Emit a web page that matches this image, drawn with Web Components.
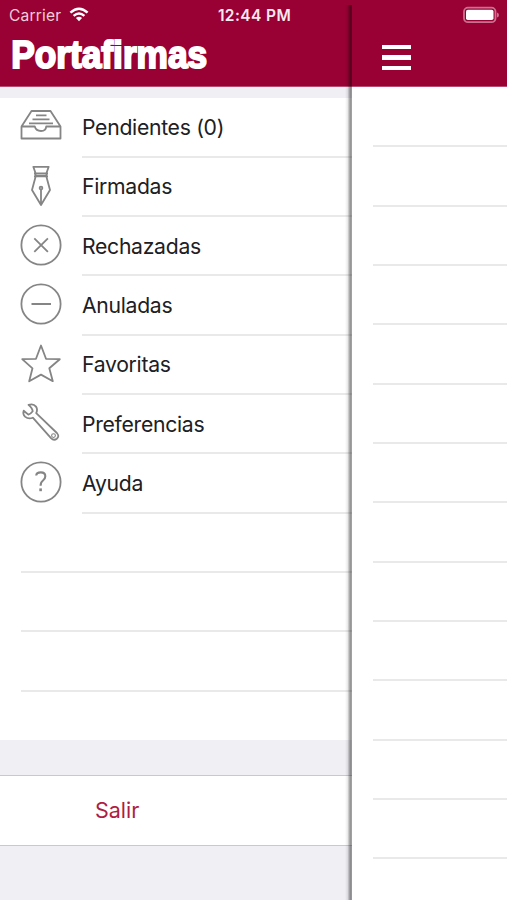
<!DOCTYPE html>
<html lang="es">
<head>
<meta charset="utf-8">
<title>Portafirmas</title>
<style>
html,body{margin:0;height:100%;overflow:hidden;background:#fff}
body{font-family:Inter,"Liberation Sans",sans-serif;color:#202022}
</style>
</head>
<body>
<portafirmas-app></portafirmas-app>
<script>
const define = (name, html, setup) => {
  const t = document.createElement('template');
  t.innerHTML = html;
  customElements.define(name, class extends HTMLElement {
    constructor() {
      super();
      this.attachShadow({mode: 'open'}).append(t.content.cloneNode(true));
    }
    connectedCallback() { if (setup) setup(this, this.shadowRoot); }
  });
};

define('status-bar', `
<style>
:host{position:absolute;top:0;left:0;right:0;height:30px;display:grid;grid-template-columns:1fr auto 1fr;align-items:center;padding:0 7px 0 9px;box-sizing:border-box;color:#fff;z-index:3}
.left{display:flex;align-items:center;gap:8px;font-size:15.6px;letter-spacing:.15px;color:#f0cdd8}
.time{font-size:15.5px;font-weight:600;letter-spacing:.4px;color:#fae9ee}
.right{display:flex;justify-content:flex-end}
svg{display:block}
.left svg{margin-top:-2px}
</style>
<div class="left"><span>Carrier</span>
<svg width="20" height="15" viewBox="0 0 20 15" fill="none" stroke="#fff" stroke-width="2.5"><path d="M1.4 5.6Q10-2.2 18.6 5.6M4.6 8.9Q10 4.1 15.4 8.9"/><path d="M6.9 11.1Q10 8.6 13.1 11.1L10 14.2Z" fill="#fff" stroke="none"/></svg></div>
<div class="time">12:44 PM</div>
<div class="right"><svg width="37" height="18" viewBox="0 0 37 18"><rect x="1" y="1.6" width="31.5" height="14.6" rx="4" fill="none" stroke="#c9718e" stroke-width="1.8"/><rect x="3" y="3.7" width="27.5" height="10.4" rx="1.8" fill="#fff"/><path d="M34 6.5Q36 7 36 9T34 11.5Z" fill="#c9718e"/></svg></div>`);

define('app-title', `
<style>
:host{display:block}svg{display:block;overflow:visible}
text{font:bold 39px "Liberation Sans",sans-serif;fill:#fff;stroke:#fff;stroke-width:2.1px}
</style>
<svg width="200" height="40"><text x="-.8" y="29.800" textLength="196" lengthAdjust="spacingAndGlyphs">Portafirmas</text></svg>`);

const icons = {
  tray: '<path d="M1.5 21.5V33.5H40.5V21.5L30.5 6H11.5L1.5 21.5H14.8Q16 26 21 26T26.200 21.5H40.500M16 10.300H26.500M12.500 14.300H29.500M9 18.300H33"/>',
  pen: '<path d="M13.300 1.800H28.700L26.500 8V11H15.500V8L13.300 1.800ZM14 8.500H28M14 11.400H28M15.500 12L12 25L21 40L30 25L26.500 12M21 24V39"/><circle cx="21" cy="23" r="1.400"/>',
  cross: '<circle cx="21" cy="21" r="19.600"/><path d="M14.300 14.300L27.900 27.900M27.900 14.300L14.300 27.900"/>',
  minus: '<circle cx="21" cy="21" r="19.600"/><path d="M11.500 21H31" stroke-width="2"/>',
  star: '<path d="M21 2.500L26 15.800L39.800 16.200L29.300 25.300L32.800 38.200L21 31.600L9.200 38.200L12.500 25.300L2.200 16.200L16 15.800Z"/>',
  wrench: '<path d="M8.500 2.900Q13.500 1.200 16 4.600Q18 7.300 16.200 11.200L36.900 31Q39.800 34.300 36.800 36.800Q33.800 39 31 36.200L12.800 15.700Q8.500 17.600 5 14.600Q2.500 12 3.700 8.700L8.400 12.600Q10.600 12 12.700 9.200Q12.500 6.300 8.500 2.900Z"/><circle cx="33.500" cy="33.600" r="1.900" stroke-width="1.100"/>',
  help: '<circle cx="21" cy="21" r="19.600"/><path d="M16.200 14.500Q16.500 11.400 20.800 11.400Q25.300 11.400 25.300 15.300Q25.300 17.800 23 19.500Q20.600 21.200 20.600 24.800" stroke-width="2.100"/><path d="M20.600 27.400V30.200" stroke-width="2.600"/>'
};
define('line-icon', `
<style>:host{display:block;width:42px;height:42px}svg{display:block}</style>
<svg width="42" height="42" viewBox="0 0 42 42" fill="none" stroke="#858585" stroke-width="1.800" stroke-linejoin="round"></svg>`,
(host, root) => { root.querySelector('svg').innerHTML = icons[host.getAttribute('name')] || ''; });

define('menu-row', `
<style>
:host{display:grid;grid-template-columns:62px 1fr;height:59.34px;padding-left:20px;box-sizing:border-box}
.icon{padding:6.900px 0 0 .4px}
.label{display:flex;align-items:center;font-size:21.200px;letter-spacing:-.3px;border-bottom:2px solid #e9e9ea;white-space:nowrap}
</style>
<div class="icon"></div><div class="label"><slot></slot></div>`,
(host, root) => {
  const icon = document.createElement('line-icon');
  icon.setAttribute('name', host.getAttribute('icon'));
  root.querySelector('.icon').replaceChildren(icon);
});

define('blank-row', `
<style>:host{display:block;height:59.34px;box-sizing:border-box;margin-left:21px;border-bottom:2px solid #e9e9ea}</style>`);

define('menu-drawer', `
<style>
:host{display:flex;flex-direction:column;height:900px;background:#efeff4;box-sizing:border-box;position:relative}
header{height:87px;background:#990033;padding:38px 0 0 12px;box-sizing:border-box;border-bottom:1px solid #b64c70}
.list{margin-top:11px;height:642px;background:#fff;overflow:hidden;box-sizing:border-box;padding-top:.4px}
.exit{margin-top:35px;height:71px;box-sizing:border-box;border-top:1.500px solid #c9c9cd;border-bottom:1.500px solid #c9c9cd;background:#fff;display:flex;align-items:center;padding:0 0 2px 95px;color:#b01c43;font-size:21.500px}
.edge{position:absolute;top:5px;right:0;bottom:0;width:7px;background:linear-gradient(90deg,transparent,rgba(0,0,0,.08) 35%,rgba(0,0,0,.42) 75%,rgba(0,0,0,.35))}
</style>
<header><app-title></app-title></header>
<div class="list">
<menu-row icon="tray">Pendientes (0)</menu-row>
<menu-row icon="pen">Firmadas</menu-row>
<menu-row icon="cross">Rechazadas</menu-row>
<menu-row icon="minus">Anuladas</menu-row>
<menu-row icon="star">Favoritas</menu-row>
<menu-row icon="wrench">Preferencias</menu-row>
<menu-row icon="help">Ayuda</menu-row>
<blank-row></blank-row><blank-row></blank-row><blank-row></blank-row>
</div>
<div class="exit">Salir</div>
<div class="edge"></div>`);

define('content-panel', `
<style>
:host{display:block;height:900px;background:#fff;overflow:hidden}
header{height:87px;background:#990033;padding:45px 0 0 30px;box-sizing:border-box;border-bottom:1px solid #b64c70}
.burger{width:29px;display:grid;row-gap:6px}
.burger i{height:4.300px;background:#fff}
.rows{padding-top:1px}
</style>
<header><div class="burger"><i></i><i></i><i></i></div></header>
<div class="rows"></div>`,
(host, root) => {
  const rows = root.querySelector('.rows');
  for (let i = 0; i < 14; i++) rows.append(document.createElement('blank-row'));
});

define('portafirmas-app', `
<style>:host{display:grid;grid-template-columns:352px 1fr;width:507px;height:900px;overflow:hidden;position:relative}</style>
<menu-drawer></menu-drawer><content-panel></content-panel><status-bar></status-bar>`);
</script>
</body>
</html>
